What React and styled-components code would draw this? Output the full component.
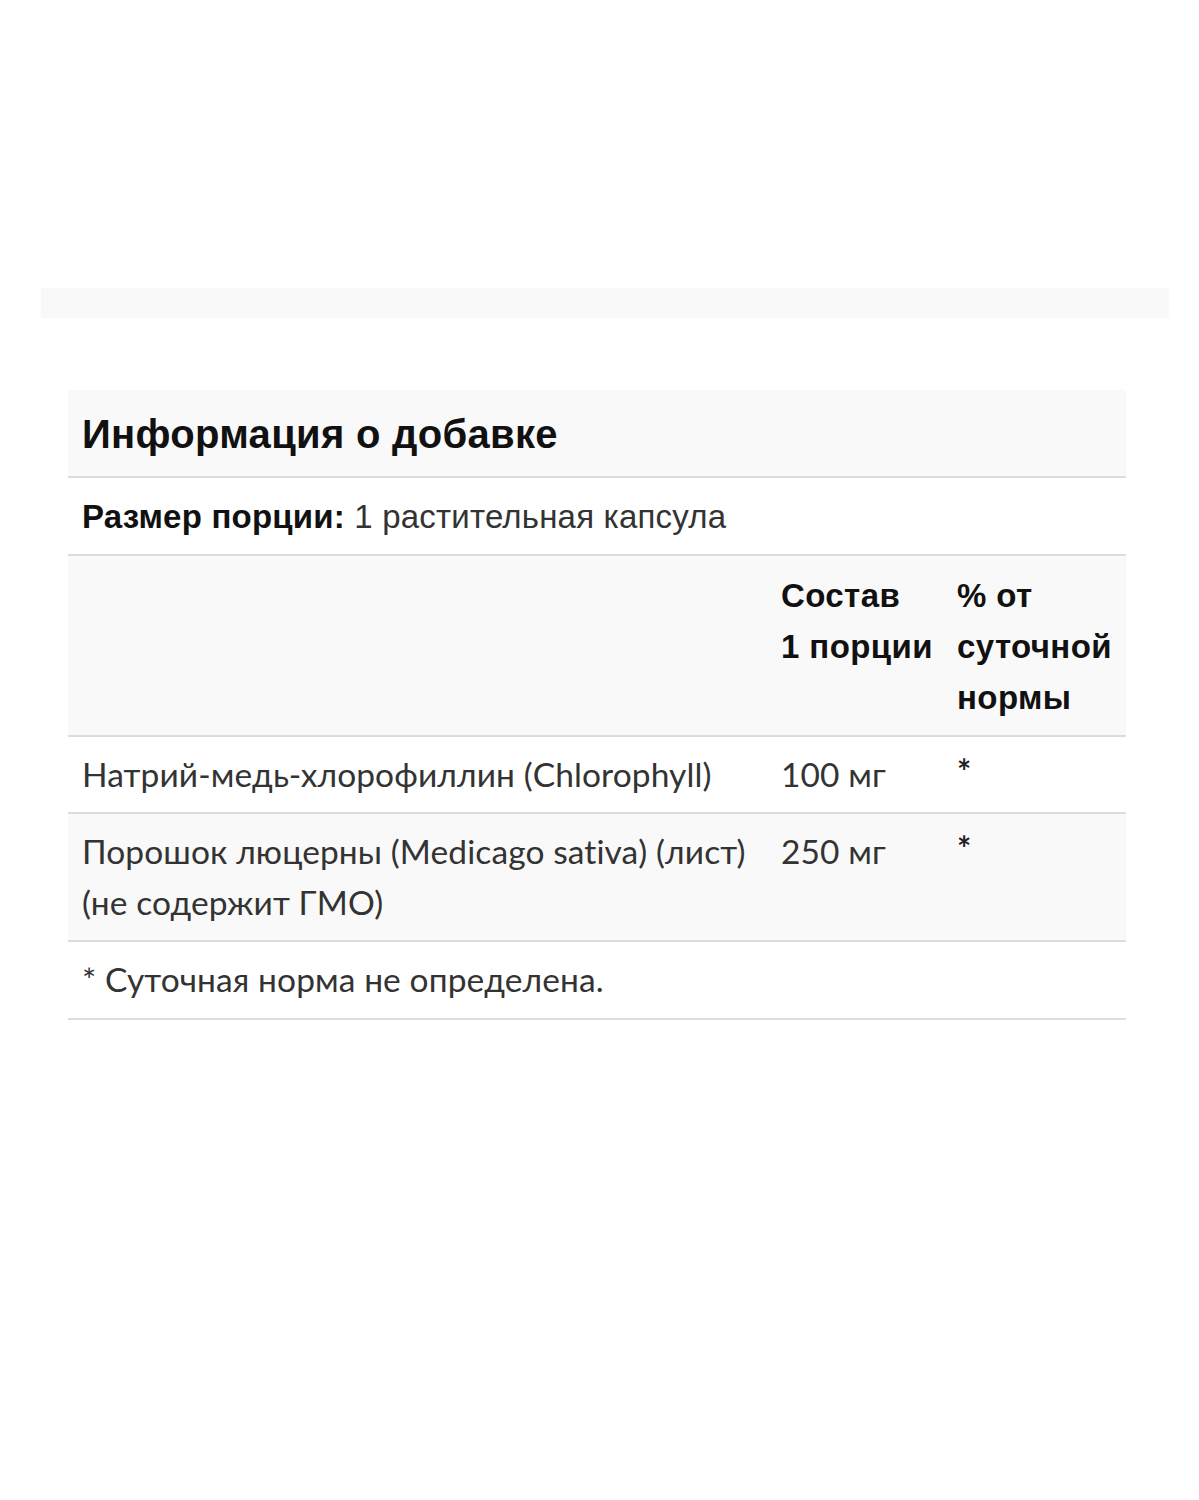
import React from "react";
import styled, { createGlobalStyle } from "styled-components";

const GlobalStyle = createGlobalStyle`
    body {
        margin: 0;
        background: #ffffff;
        font-family: "Liberation Sans", Arial, sans-serif;
        color: #333;
    }
`;

const Page = styled.div`
    width: 1199px;
    height: 1500px;
    padding-top: 288px;
    box-sizing: border-box;
`;

const Band = styled.div`
    height: 30px;
    margin: 0 30px 0 41px;
    background: #f9f9f9;
`;

const Table = styled.div`
    margin: 72px 73px 0 68px;
    display: flex;
    flex-direction: column;
`;

const TitleRow = styled.div`
    background: #f9f9f9;
    border-bottom: 2px solid #dcdcdc;
    padding: 19px 14px 16px;
    font-family: "Liberation Sans", Arial, sans-serif;
    font-weight: 700;
    font-size: 40px;
    line-height: 51px;
    letter-spacing: 0.3px;
    color: #111;
`;

const ServingRow = styled.div`
    border-bottom: 2px solid #dcdcdc;
    padding: 13px 14px 12px;
    font-family: "Liberation Sans", Arial, sans-serif;
    font-size: 33px;
    line-height: 51px;
    letter-spacing: 0.2px;
    color: #333;
    b {
        color: #111;
    }
`;

const Grid = styled.div`
    display: grid;
    grid-template-columns: 699px 176px 1fr;
    background: ${p => (p.$shaded ? "#f9f9f9" : "#ffffff")};
    border-bottom: 2px solid #dcdcdc;
    padding: ${p => p.$pad || "12px 0"};
`;

const HeadCell = styled.div`
    padding: 0 0 0 14px;
    font-family: "Liberation Sans", Arial, sans-serif;
    font-weight: 700;
    font-size: 33px;
    line-height: 51px;
    letter-spacing: 0.4px;
    color: #111;
`;

const Cell = styled.div`
    padding: 0 0 0 14px;
    font-family: Lato, "Liberation Sans", sans-serif;
    font-size: 33.5px;
    line-height: 51px;
    letter-spacing: 0.1px;
    color: #333;
`;

const Star = styled(Cell)`
    line-height: 44px;
    font-weight: 700;
    color: #222;
`;

const Footer = styled.div`
    border-bottom: 2px solid #dcdcdc;
    padding: 12px 14px 13px;
    font-family: Lato, "Liberation Sans", sans-serif;
    font-size: 33.5px;
    line-height: 51px;
    letter-spacing: 0.1px;
    color: #333;
`;

const rows = [
    { name: "Натрий-медь-хлорофиллин (Chlorophyll)", amount: "100 мг", shaded: false },
    { name: "Порошок люцерны (Medicago sativa) (лист) (не содержит ГМО)", amount: "250 мг", shaded: true },
];

export default function App() {
    return (
        <>
            <GlobalStyle />
            <Page>
                <Band />
                <Table>
                    <TitleRow>Информация о добавке</TitleRow>
                    <ServingRow>
                        <b>Размер порции:</b> 1 растительная капсула
                    </ServingRow>
                    <Grid $shaded $pad="14px 0 12px">
                        <HeadCell />
                        <HeadCell>Состав 1&nbsp;порции</HeadCell>
                        <HeadCell>% от суточной нормы</HeadCell>
                    </Grid>
                    {rows.map(r => (
                        <Grid key={r.name} $shaded={r.shaded}>
                            <Cell>{r.name}</Cell>
                            <Cell>{r.amount}</Cell>
                            <Star>*</Star>
                        </Grid>
                    ))}
                    <Footer>* Суточная норма не определена.</Footer>
                </Table>
            </Page>
        </>
    );
}
